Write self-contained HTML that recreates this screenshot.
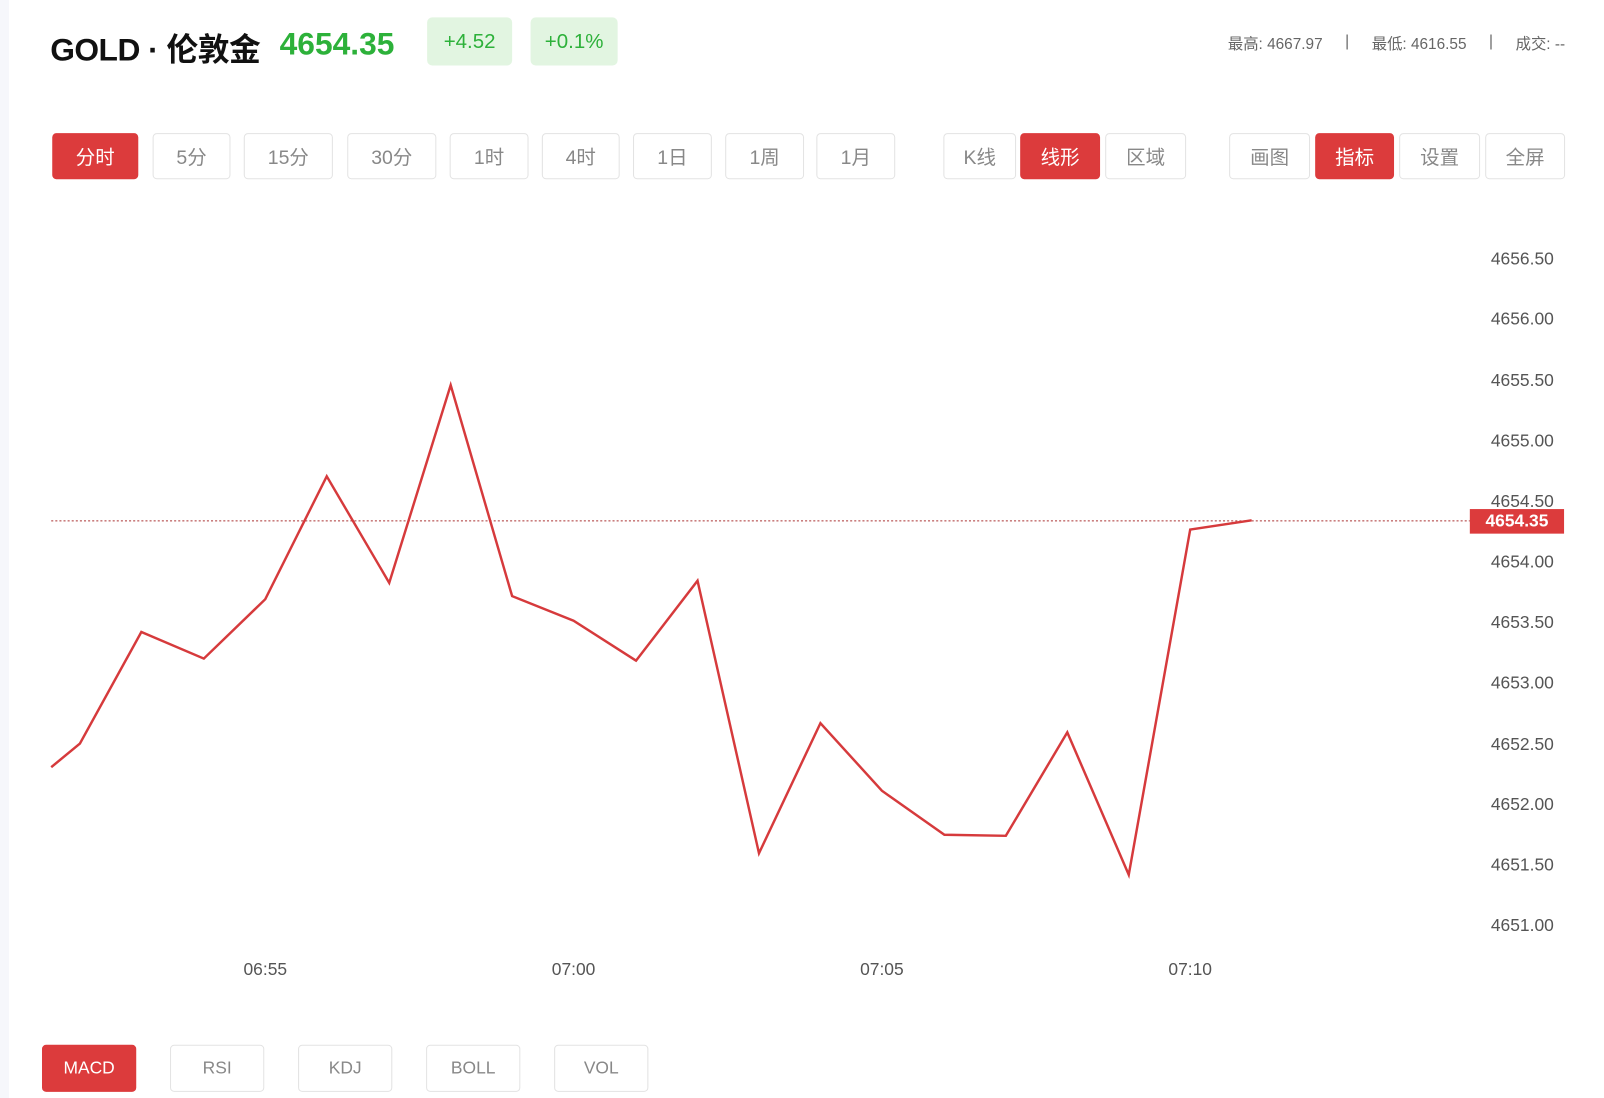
<!DOCTYPE html>
<html><head><meta charset="utf-8"><style>
body{margin:0;width:1604px;height:1098px;background:#fff;position:relative;overflow:hidden;font-family:"Liberation Sans","Noto Sans CJK SC",sans-serif}
#w{position:absolute;left:0;top:0;width:1566px;height:1072px;transform:scale(1.02427);transform-origin:0 0}
.strip{position:absolute;left:0;top:0;width:9px;height:1098px;background:#f6f7fb}
.abs{position:absolute}
.b{position:absolute;top:130px;height:45px;border:1px solid #e3e3e3;border-radius:4px;box-sizing:border-box;color:#888;font-size:19px;display:flex;align-items:center;justify-content:center;background:#fff}
.on{background:#dc3b3c;border-color:#dc3b3c;color:#fff}
.bb{top:1020px;height:46px;font-size:17px}
.y{position:absolute;right:49px;font-size:17px;color:#555;line-height:20px}
.x{position:absolute;top:937px;font-size:17px;color:#555;width:80px;text-align:center}
.st{position:absolute;right:38px;top:32px;font-size:15px;color:#666;display:flex}
.st span{margin-left:22px}
</style></head><body>
<div class="strip"></div>
<div id="w">
<div class="abs" style="left:49px;top:23px;font-size:31px;font-weight:bold;color:#111;letter-spacing:-0.5px">GOLD · 伦敦金</div>
<div class="abs" style="left:273px;top:25px;font-size:31px;font-weight:bold;color:#2db13a">4654.35</div>
<div class="abs" style="left:417px;top:17px;width:83px;height:47px;background:#e2f5e1;border-radius:5px;color:#2db13a;font-size:20px;display:flex;align-items:center;justify-content:center;padding-top:2px;box-sizing:border-box">+4.52</div>
<div class="abs" style="left:518px;top:17px;width:85px;height:47px;background:#e2f5e1;border-radius:5px;color:#2db13a;font-size:20px;display:flex;align-items:center;justify-content:center;padding-top:2px;box-sizing:border-box">+0.1%</div>
<div class="st"><span>最高: 4667.97</span><span>|</span><span>最低: 4616.55</span><span>|</span><span>成交: --</span></div>
<div class="b on" style="left:51px;width:84px">分时</div>
<div class="b" style="left:149px;width:76px">5分</div>
<div class="b" style="left:238px;width:87px">15分</div>
<div class="b" style="left:339px;width:87px">30分</div>
<div class="b" style="left:439px;width:77px">1时</div>
<div class="b" style="left:529px;width:76px">4时</div>
<div class="b" style="left:618px;width:77px">1日</div>
<div class="b" style="left:708px;width:77px">1周</div>
<div class="b" style="left:797px;width:77px">1月</div>
<div class="b" style="left:921px;width:71px">K线</div>
<div class="b on" style="left:996px;width:78px">线形</div>
<div class="b" style="left:1079px;width:79px">区域</div>
<div class="b" style="left:1200px;width:79px">画图</div>
<div class="b on" style="left:1284px;width:77px">指标</div>
<div class="b" style="left:1366px;width:79px">设置</div>
<div class="b" style="left:1450px;width:78px">全屏</div>
<div class="y" style="top:243px">4656.50</div>
<div class="y" style="top:302px">4656.00</div>
<div class="y" style="top:362px">4655.50</div>
<div class="y" style="top:421px">4655.00</div>
<div class="y" style="top:480px">4654.50</div>
<div class="y" style="top:539px">4654.00</div>
<div class="y" style="top:598px">4653.50</div>
<div class="y" style="top:657px">4653.00</div>
<div class="y" style="top:717px">4652.50</div>
<div class="y" style="top:776px">4652.00</div>
<div class="y" style="top:835px">4651.50</div>
<div class="y" style="top:894px">4651.00</div>
<svg class="abs" style="left:0;top:0" width="1566" height="1072">
<line x1="50" y1="508.5" x2="1435" y2="508.5" stroke="#a33" stroke-width="1" stroke-dasharray="2,2"/>
<polyline fill="none" stroke="#d63a3c" stroke-width="2.4" points="50,749 78,726 138,617 199,643 259,585 319,465 380,569 440,376 500,582 560,606 621,645 681,567 741,833 801,706 861,772 922,815 982,816 1042,715 1102,854 1162,517 1222,508"/>
</svg>
<div class="abs" style="left:1435px;top:497px;width:92px;height:24px;background:#dc3b3c;color:#fff;font-size:17px;font-weight:bold;display:flex;align-items:center;justify-content:center">4654.35</div>
<div class="x" style="left:219px">06:55</div>
<div class="x" style="left:520px">07:00</div>
<div class="x" style="left:821px">07:05</div>
<div class="x" style="left:1122px">07:10</div>
<div class="b bb on" style="left:41px;width:92px">MACD</div>
<div class="b bb" style="left:166px;width:92px">RSI</div>
<div class="b bb" style="left:291px;width:92px">KDJ</div>
<div class="b bb" style="left:416px;width:92px">BOLL</div>
<div class="b bb" style="left:541px;width:92px">VOL</div>
</div>
</body></html>
